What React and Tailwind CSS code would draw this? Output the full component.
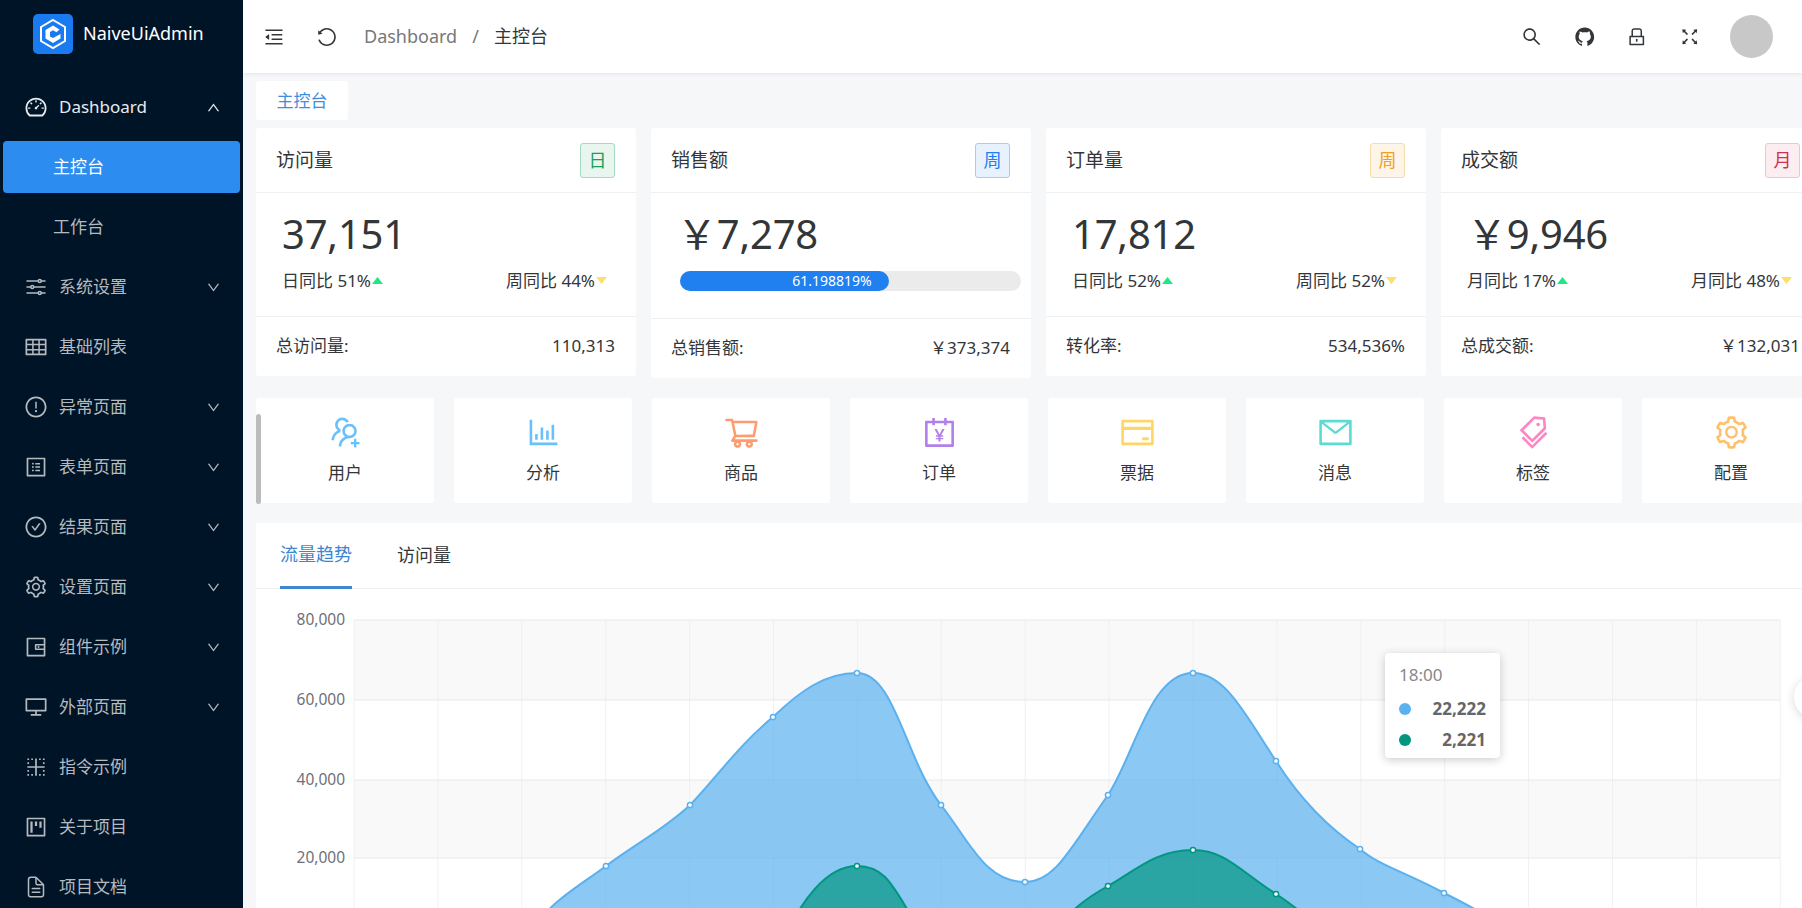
import {
  AiOutlineDashboard, AiOutlineTable, AiOutlineExclamationCircle, AiOutlineProfile, AiOutlineCheckCircle,
  AiOutlineSetting, AiOutlineWallet, AiOutlineDesktop, AiOutlineBorderInner, AiOutlineProject, AiOutlineUp, AiOutlineDown,
  AiOutlineMenuFold, AiOutlineReload, AiOutlineSearch, AiOutlineGithub, AiOutlineLock, AiOutlineFullscreen,
  AiOutlineUsergroupAdd, AiOutlineBarChart, AiOutlineShoppingCart, AiOutlineAccountBook, AiOutlineCreditCard, AiOutlineMail, AiOutlineTags,
} from "react-icons/ai"
import { IoOptionsOutline, IoDocumentTextOutline } from "react-icons/io5"

const menu = [
  { icon: AiOutlineDashboard, label: "Dashboard", open: true, bright: true },
  { label: "主控台", sub: true, active: true },
  { label: "工作台", sub: true },
  { icon: IoOptionsOutline, label: "系统设置", arrow: true },
  { icon: AiOutlineTable, label: "基础列表" },
  { icon: AiOutlineExclamationCircle, label: "异常页面", arrow: true },
  { icon: AiOutlineProfile, label: "表单页面", arrow: true },
  { icon: AiOutlineCheckCircle, label: "结果页面", arrow: true },
  { icon: AiOutlineSetting, label: "设置页面", arrow: true },
  { icon: AiOutlineWallet, label: "组件示例", arrow: true },
  { icon: AiOutlineDesktop, label: "外部页面", arrow: true },
  { icon: AiOutlineBorderInner, label: "指令示例" },
  { icon: AiOutlineProject, label: "关于项目" },
  { icon: IoDocumentTextOutline, label: "项目文档" },
]

const cards = [
  { title: "访问量", tag: "日", tagClass: "bg-[#e9f5ef] border-[#a3d9bd] text-[#18a058]", value: "37,151", left: "日同比 51%", right: "周同比 44%", foot: "总访问量:", total: "110,313" },
  { title: "销售额", tag: "周", tagClass: "bg-[#e8f2fe] border-[#a6cbf5] text-[#2080f0]", value: "￥7,278", progress: true, foot: "总销售额:", total: "￥373,374" },
  { title: "订单量", tag: "周", tagClass: "bg-[#fdf5e8] border-[#f7dcab] text-[#f0a020]", value: "17,812", left: "日同比 52%", right: "周同比 52%", foot: "转化率:", total: "534,536%" },
  { title: "成交额", tag: "月", tagClass: "bg-[#fbedf0] border-[#f2c3cc] text-[#d03050]", value: "￥9,946", left: "月同比 17%", right: "月同比 48%", foot: "总成交额:", total: "￥132,031" },
]

const shortcuts = [
  { icon: AiOutlineUsergroupAdd, label: "用户", color: "text-[#69c0ff]" },
  { icon: AiOutlineBarChart, label: "分析", color: "text-[#69c0ff]" },
  { icon: AiOutlineShoppingCart, label: "商品", color: "text-[#ff9c6e]" },
  { icon: AiOutlineAccountBook, label: "订单", color: "text-[#b37feb]" },
  { icon: AiOutlineCreditCard, label: "票据", color: "text-[#ffd666]" },
  { icon: AiOutlineMail, label: "消息", color: "text-[#5cdbd3]" },
  { icon: AiOutlineTags, label: "标签", color: "text-[#ff85c0]" },
  { icon: AiOutlineSetting, label: "配置", color: "text-[#ffc069]" },
]

const headerIcons = [AiOutlineSearch, AiOutlineGithub, AiOutlineLock, AiOutlineFullscreen]

const bluePoints = [[606, 867], [690, 806], [773, 718], [857, 674], [941, 806], [1025, 883], [1108, 796], [1193, 674], [1276, 762], [1360, 850], [1444, 894]]
const greenPoints = [[857, 867], [1108, 887], [1193, 851], [1276, 895]]
const gridX = Array.from({ length: 18 }, (_, i) => 354 + i * 83.9)
const gridY = [[621, "80,000"], [701, "60,000"], [781, "40,000"], [859, "20,000"]]

const bluePath = "M530 938 C545 905 575 890 606 867 C635 845 665 830 690 806 C715 780 740 745 773 718 C800 692 825 674 857 674 C895 674 905 760 941 806 C970 843 985 883 1025 883 C1055 883 1070 850 1108 796 C1135 755 1150 674 1193 674 C1225 674 1245 715 1276 762 C1300 800 1330 830 1360 850 C1378 866 1405 873 1444 894 C1480 912 1510 930 1528 938"
const greenPath1 = "M785 938 C800 905 825 867 857 867 C890 867 895 895 925 938"
const greenPath2 = "M1050 938 C1070 910 1090 897 1108 887 C1135 872 1155 851 1193 851 C1225 851 1240 872 1276 895 C1290 904 1310 920 1330 938"

const Logo = () => (
  <svg width="40" height="40" viewBox="0 0 40 40">
    <rect width="40" height="40" rx="5" fill="#1a7af0" />
    <path d="M20 6 L32 13 V27 L20 34 L8 27 V13 Z" fill="none" stroke="#fff" strokeWidth="2" />
    <path d="M26.5 15.5 L20 11.5 L12.5 16 V24.5 L20 29 L27.5 24.5 V20 L20 24 L17 22.5 V18 L20 16.2 L23.5 18.2 Z" fill="#fff" />
  </svg>
)

const Caret = ({ up }) => (
  <svg width="11" height="7" viewBox="0 0 11 7" className="ml-px -translate-y-px">
    <path d={up ? "M5.5 0 L11 7 H0 Z" : "M0 0 H11 L5.5 7 Z"} fill={up ? "#1ee883" : "#ffdf6b"} />
  </svg>
)

const StatCard = ({ card }) => (
  <div className={`w-[380px] shrink-0 bg-white rounded-[3px] ${card.progress ? "h-[250px]" : "h-[248px]"}`}>
    <div className="h-[65px] flex items-center justify-between pl-5 pr-[21px] border-b border-[#eff0f2]">
      <span className="text-[19px] text-[#333639]">{card.title}</span>
      <span className={`w-[35px] h-[35px] flex items-center justify-center border rounded-[3px] text-[18px] ${card.tagClass}`}>{card.tag}</span>
    </div>
    <div className={`${card.progress ? "h-[126px]" : "h-[124px]"} border-b border-[#eff0f2] pt-[13px] pl-[26px] pr-[29px]`}>
      <div className="text-[40px] leading-[56px] text-[#333639] tracking-[-0.2px]">{card.value}</div>
      {card.progress ? (
        <div className="mt-[9px] ml-[3px] mr-[-19px] h-5 rounded-full bg-[#ebebec]">
          <div className="w-[61.2%] h-5 rounded-full bg-[#2080f0] text-white text-[14px] leading-5 text-right pr-[17px]">61.198819%</div>
        </div>
      ) : (
        <div className="mt-[7px] flex justify-between text-[17px] leading-6 text-[#333639]">
          <span className="flex items-center">{card.left}<Caret up /></span>
          <span className="flex items-center">{card.right}<Caret /></span>
        </div>
      )}
    </div>
    <div className="h-[58px] flex items-center justify-between pl-5 pr-[21px] text-[17px] text-[#333639]">
      <span>{card.foot}</span>
      <span>{card.total}</span>
    </div>
  </div>
)

const Chart = () => (
  <svg width="1546" height="319" viewBox="256 590 1546 319" className="block">
    <rect x="354" y="621" width="1426" height="80" fill="#f9f9f9" />
    <rect x="354" y="781" width="1426" height="78" fill="#f9f9f9" />
    {gridX.map((x) => (
      <line key={x} x1={x} x2={x} y1="621" y2="908" stroke="#f0f0f2" />
    ))}
    {gridY.map(([y, label]) => (
      <g key={label}>
        <line x1="354" x2="1780" y1={y} y2={y} stroke="#e8e8ea" />
        <text x="345" y={y + 5} textAnchor="end" fontSize="15.5" fill="#6e7079">{label}</text>
      </g>
    ))}
    <path d={`${bluePath} Z`} fill="#5ab1ef" fillOpacity="0.7" stroke="none" />
    <path d={bluePath} fill="none" stroke="#5ab1ef" strokeWidth="2" />
    <path d={`${greenPath1} Z`} fill="#019680" fillOpacity="0.7" />
    <path d={`${greenPath2} Z`} fill="#019680" fillOpacity="0.7" />
    <path d={greenPath1} fill="none" stroke="#019680" strokeWidth="2" />
    <path d={greenPath2} fill="none" stroke="#019680" strokeWidth="2" />
    {bluePoints.map(([x, y]) => (
      <circle key={x} cx={x} cy={y} r="2.6" fill="#fff" stroke="#5ab1ef" strokeWidth="1.5" />
    ))}
    {greenPoints.map(([x, y]) => (
      <circle key={x} cx={x} cy={y} r="2.6" fill="#fff" stroke="#019680" strokeWidth="1.5" />
    ))}
  </svg>
)

export default function App() {
  return (
    <div className="relative w-[1802px] h-[908px] overflow-hidden flex bg-[#f5f7f9] font-['Noto_Sans','Noto_Sans_CJK_SC',sans-serif]">
      <aside className="w-[243px] shrink-0 bg-[#001428] text-[#b5babf]">
        <div className="h-[81px] pb-[14px] pl-[33px] flex items-center gap-[10px]">
          <Logo />
          <span className="text-[18px] text-white">NaiveUiAdmin</span>
        </div>
        <nav className="flex flex-col gap-2 mx-[3px]">
          {menu.map((item) => {
            const Icon = item.icon
            return (
              <div
                key={item.label}
                className={`h-[52px] shrink-0 flex items-center rounded-[4px] text-[17px] ${item.sub ? "pl-[50px]" : "pl-[21px]"} ${item.active ? "bg-[#2d8cf0] text-white" : ""} ${item.bright ? "text-[#e8eaed]" : ""}`}
              >
                {Icon && <Icon size={24} className="mr-[11px] shrink-0" />}
                <span>{item.label}</span>
                {item.open && <AiOutlineUp size={15} className="ml-auto mr-[19px]" />}
                {item.arrow && <AiOutlineDown size={15} className="ml-auto mr-[19px]" />}
              </div>
            )
          })}
        </nav>
      </aside>

      <main className="flex-1 min-w-0 flex flex-col">
        <header className="h-[73px] shrink-0 bg-white shadow-[0_1px_4px_rgba(0,21,41,0.08)] flex items-center">
          <AiOutlineMenuFold size={22} className="ml-5 text-[#333639]" />
          <AiOutlineReload size={22} className="ml-[31px] text-[#333639] -scale-x-100" />
          <div className="ml-[26px] flex items-center text-[18px] text-[#76787b]">
            <span>Dashboard</span>
            <span className="mx-[15px]">/</span>
            <span className="text-[#333639]">主控台</span>
          </div>
          <div className="ml-auto flex items-center gap-[31px] mr-[-23px]">
            {headerIcons.map((Icon, i) => (
              <Icon key={i} size={21.5} className="text-[#333639]" />
            ))}
            <div className="w-[43px] h-[43px] rounded-full bg-[#c8c8c8] ml-[-1px]" />
            <AiOutlineSetting size={22} className="text-[#333639] ml-[-1px]" />
          </div>
        </header>

        <div className="pl-[13px] pt-2 flex flex-col items-start">
          <div className="w-[92px] h-[39px] bg-white rounded-[3px] flex items-center justify-center text-[17px] text-[#3d8ee0]">主控台</div>

          <div className="mt-2 flex items-start gap-[15px]">
            {cards.map((card) => (
              <StatCard key={card.title} card={card} />
            ))}
          </div>

          <div className="relative mt-5 flex gap-5">
            {shortcuts.map((s) => {
              const Icon = s.icon
              return (
                <div key={s.label} className="w-[178px] h-[105px] shrink-0 bg-white rounded-[3px] flex flex-col items-center pt-[16px]">
                  <Icon size={37} className={s.color} />
                  <span className="mt-[9px] text-[17px] text-[#333639]">{s.label}</span>
                </div>
              )
            })}
            <div className="absolute left-0 top-[16px] w-[5px] h-[90px] rounded-full bg-[#bcbcbc]" />
          </div>

          <div className="relative mt-5 w-[1546px] bg-white">
            <div className="h-[66px] border-b border-[#eff0f2] flex items-start pl-6 gap-[45px] text-[18px] text-[#333639]">
              <span className="h-[66px] flex items-center border-b-[3px] border-[#3d86d0] text-[#3d86d0]">流量趋势</span>
              <span className="h-[64px] flex items-center">访问量</span>
            </div>
            <Chart />
            <div className="absolute left-[1129px] top-[130px] w-[115px] h-[105px] bg-white rounded-[4px] shadow-[0_2px_10px_rgba(0,0,0,0.2)] pl-[14px] pr-[14px] pt-[10px] text-[17px]">
              <div className="text-[#888] leading-6">18:00</div>
              <div className="mt-[6px] flex items-center justify-between font-bold text-[#666] leading-[31px]">
                <span className="w-3 h-3 rounded-full bg-[#5ab1ef]" />
                <span>22,222</span>
              </div>
              <div className="flex items-center justify-between font-bold text-[#666] leading-[31px]">
                <span className="w-3 h-3 rounded-full bg-[#019680]" />
                <span>2,221</span>
              </div>
            </div>
          </div>
        </div>
      </main>

      <div className="absolute left-[1794px] top-[675px] w-11 h-11 rounded-full bg-white shadow-[0_2px_10px_rgba(0,0,0,0.15)]" />
    </div>
  )
}
